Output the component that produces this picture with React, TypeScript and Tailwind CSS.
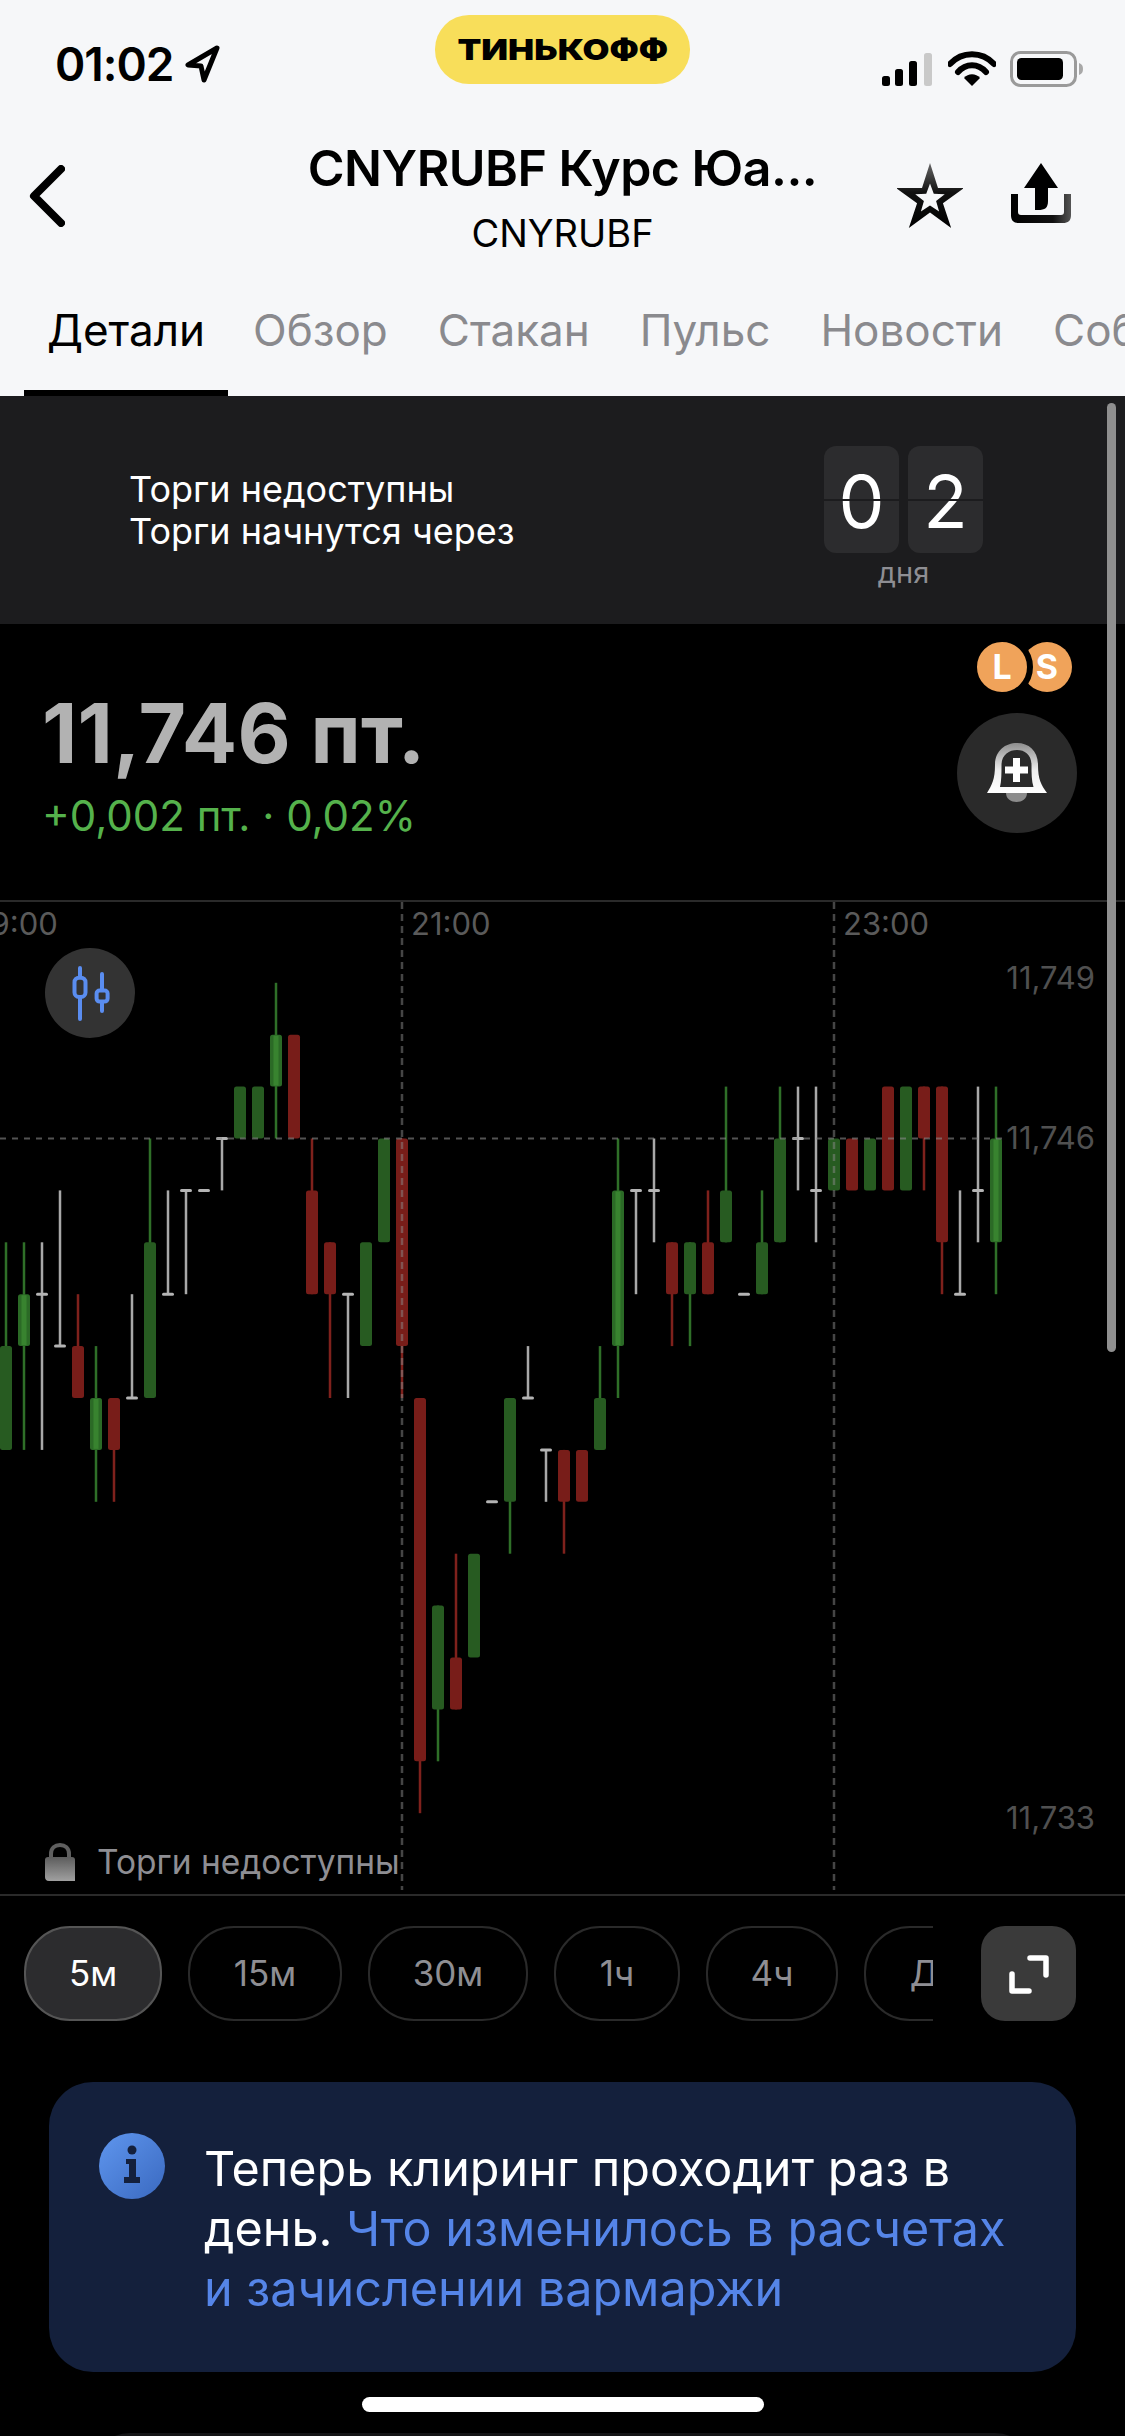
import React from "react";

// candle: [index, colour, bodyTop, bodyBottom, wickTop, wickBottom, bright]
// values are price levels below 11,746 (one level = 0.001)
type Candle = { i: number; c: "g" | "r" | "w"; t: number; b: number; wt?: number; wb?: number; hi?: boolean };

const CANDLES: Candle[] = [
  { i: 0, c: "g", t: 4, b: 6, wt: 2, wb: 6 },
  { i: 1, c: "g", t: 3, b: 4, wt: 2, wb: 6, hi: true },
  { i: 2, c: "w", t: 3, b: 3, wt: 2, wb: 6 },
  { i: 3, c: "w", t: 4, b: 4, wt: 1, wb: 4 },
  { i: 4, c: "r", t: 4, b: 5, wt: 3, wb: 5 },
  { i: 5, c: "g", t: 5, b: 6, wt: 4, wb: 7, hi: true },
  { i: 6, c: "r", t: 5, b: 6, wt: 5, wb: 7 },
  { i: 7, c: "w", t: 5, b: 5, wt: 3, wb: 5 },
  { i: 8, c: "g", t: 2, b: 5, wt: 0, wb: 5 },
  { i: 9, c: "w", t: 3, b: 3, wt: 1, wb: 3 },
  { i: 10, c: "w", t: 1, b: 1, wt: 1, wb: 3 },
  { i: 11, c: "w", t: 1, b: 1 },
  { i: 12, c: "w", t: 0, b: 0, wt: 0, wb: 1 },
  { i: 13, c: "g", t: -1, b: 0 },
  { i: 14, c: "g", t: -1, b: 0 },
  { i: 15, c: "g", t: -2, b: -1, wt: -3, wb: 0, hi: true },
  { i: 16, c: "r", t: -2, b: 0 },
  { i: 17, c: "r", t: 1, b: 3, wt: 0, wb: 3 },
  { i: 18, c: "r", t: 2, b: 3, wt: 2, wb: 5 },
  { i: 19, c: "w", t: 3, b: 3, wt: 3, wb: 5 },
  { i: 20, c: "g", t: 2, b: 4 },
  { i: 21, c: "g", t: 0, b: 2 },
  { i: 22, c: "r", t: 0, b: 4, wt: 0, wb: 5 },
  { i: 23, c: "r", t: 5, b: 12, wt: 5, wb: 13 },
  { i: 24, c: "g", t: 9, b: 11, wt: 9, wb: 12 },
  { i: 25, c: "r", t: 10, b: 11, wt: 8, wb: 11 },
  { i: 26, c: "g", t: 8, b: 10 },
  { i: 27, c: "w", t: 7, b: 7 },
  { i: 28, c: "g", t: 5, b: 7, wt: 5, wb: 8 },
  { i: 29, c: "w", t: 5, b: 5, wt: 4, wb: 5 },
  { i: 30, c: "w", t: 6, b: 6, wt: 6, wb: 7 },
  { i: 31, c: "r", t: 6, b: 7, wt: 6, wb: 8 },
  { i: 32, c: "r", t: 6, b: 7 },
  { i: 33, c: "g", t: 5, b: 6, wt: 4, wb: 6 },
  { i: 34, c: "g", t: 1, b: 4, wt: 0, wb: 5, hi: true },
  { i: 35, c: "w", t: 1, b: 1, wt: 1, wb: 3 },
  { i: 36, c: "w", t: 1, b: 1, wt: 0, wb: 2 },
  { i: 37, c: "r", t: 2, b: 3, wt: 2, wb: 4 },
  { i: 38, c: "g", t: 2, b: 3, wt: 2, wb: 4 },
  { i: 39, c: "r", t: 2, b: 3, wt: 1, wb: 3 },
  { i: 40, c: "g", t: 1, b: 2, wt: -1, wb: 2 },
  { i: 41, c: "w", t: 3, b: 3 },
  { i: 42, c: "g", t: 2, b: 3, wt: 1, wb: 3 },
  { i: 43, c: "g", t: 0, b: 2, wt: -1, wb: 2 },
  { i: 44, c: "w", t: 0, b: 0, wt: -1, wb: 1 },
  { i: 45, c: "w", t: 1, b: 1, wt: -1, wb: 2 },
  { i: 46, c: "g", t: 0, b: 1 },
  { i: 47, c: "r", t: 0, b: 1 },
  { i: 48, c: "g", t: 0, b: 1 },
  { i: 49, c: "r", t: -1, b: 1 },
  { i: 50, c: "g", t: -1, b: 1 },
  { i: 51, c: "r", t: -1, b: 0, wt: -1, wb: 1 },
  { i: 52, c: "r", t: -1, b: 2, wt: -1, wb: 3 },
  { i: 53, c: "w", t: 3, b: 3, wt: 1, wb: 3 },
  { i: 54, c: "w", t: 1, b: 1, wt: -1, wb: 2 },
  { i: 55, c: "g", t: 0, b: 2, wt: -1, wb: 3, hi: true },
];

const BODY = { g: "#275b21", r: "#781d19", w: "#b4b4b4" };
const WICK = { g: "#2f6f28", r: "#7f211c", w: "#a8a8a8" };

const yOf = (n: number) => 236.5 + 51.9 * n;
const xOf = (i: number) => 6 + 18 * i;

function CandleChart() {
  return (
    <svg width="1125" height="992" className="block">
      {CANDLES.map((d) => {
        const x = xOf(d.i);
        return (
          <g key={d.i}>
            {d.wt !== undefined && d.wb !== undefined && (
              <rect x={x - 1.25} y={yOf(d.wt)} width="2.5" height={yOf(d.wb) - yOf(d.wt)} fill={WICK[d.c]} />
            )}
            {d.c === "w" ? (
              <rect x={x - 6} y={yOf(d.t) - 1.5} width="12" height="3" rx="1.5" fill={BODY.w} />
            ) : (
              <rect x={x - 6} y={yOf(d.t)} width="12" height={yOf(d.b) - yOf(d.t)} rx="2.5" fill={d.hi ? "#2b6a26" : BODY[d.c]} />
            )}
            {d.hi && <rect x={x - 2.5} y={yOf(d.t) + 1} width="5" height={yOf(d.b) - yOf(d.t) - 2} fill="#38832f" />}
          </g>
        );
      })}
      <line x1="0" y1="236.5" x2="1002" y2="236.5" stroke="#8a8a8a" strokeOpacity="0.6" strokeWidth="2" strokeDasharray="6 6" />
      <line x1="402" y1="0" x2="402" y2="988" stroke="#8a8a8a" strokeOpacity="0.5" strokeWidth="2.5" strokeDasharray="7 5" />
      <line x1="834" y1="0" x2="834" y2="988" stroke="#8a8a8a" strokeOpacity="0.5" strokeWidth="2.5" strokeDasharray="7 5" />
    </svg>
  );
}

function StarIcon() {
  const pts = (R: number, r: number) =>
    Array.from({ length: 10 }, (_, k) => {
      const a = (-90 + 36 * k) * (Math.PI / 180);
      const q = k % 2 === 0 ? R : r;
      return `${33 + q * Math.cos(a)} ${36 + q * Math.sin(a)}`;
    }).join(" L");
  return (
    <svg width="66" height="66" viewBox="0 0 66 66">
      <defs>
        <linearGradient id="starFill" x1="0" y1="0" x2="0" y2="1">
          <stop offset="0" stopColor="#666" />
          <stop offset="0.45" stopColor="#111" />
          <stop offset="1" stopColor="#000" />
        </linearGradient>
      </defs>
      <path d={`M${pts(36, 13.6)}Z M${pts(15.5, 6.4)}Z`} fill="url(#starFill)" fillRule="evenodd" />
    </svg>
  );
}

function ShareIcon() {
  return (
    <svg width="60" height="62" viewBox="0 0 60 62">
      <defs>
        <linearGradient id="tray" x1="0" y1="0" x2="1" y2="0">
          <stop offset="0" stopColor="#000" />
          <stop offset="0.7" stopColor="#111" />
          <stop offset="1" stopColor="#555" />
        </linearGradient>
      </defs>
      <path d="M30 0 L47 25 L37 25 L37 38 C37 45 34 47 27 47 L24 47 L24 25 L13 25Z" fill="#000" />
      <path d="M0 31 L7 31 L7 49 C7 51 8 52 10 52 L50 52 C52 52 53 51 53 49 L53 31 L60 31 L60 52 C60 58 57 60 52 60 L8 60 C3 60 0 58 0 52Z" fill="url(#tray)" />
    </svg>
  );
}

function BellIcon() {
  return (
    <svg width="60" height="60" viewBox="0 0 60 60">
      <defs>
        <linearGradient id="bell" x1="0" y1="0" x2="0" y2="1">
          <stop offset="0" stopColor="#8d8d8d" />
          <stop offset="0.55" stopColor="#eeeeee" />
          <stop offset="1" stopColor="#ffffff" />
        </linearGradient>
      </defs>
      <path d="M19 50 H40 C40 62 19 62 19 50Z" fill="#8c8c8c" />
      <path
        d="M0 50 C5 42 8 36 8 22 C8 8 18 0 30 0 C42 0 51 8 51 22 C51 36 54 42 60 50Z M13 44 H46.5 C44.5 38 44.5 30 44.5 22 C44.5 12 38 7 30 7 C22 7 14.5 12 14.5 22 C14.5 30 14.5 38 13 44Z"
        fill="url(#bell)"
        fillRule="evenodd"
      />
      <path d="M26 15 H33 V23.5 H41 V30.5 H33 V39 H26 V30.5 H18 V23.5 H26Z" fill="#fff" />
    </svg>
  );
}

function StatusIcons() {
  return (
    <div className="flex items-center">
      {/* signal */}
      <svg width="51" height="34" viewBox="0 0 51 34" className="mr-[15px]">
        <rect x="0" y="24" width="8" height="10" rx="2.5" fill="#000" />
        <rect x="13" y="17" width="8" height="17" rx="2.5" fill="#000" />
        <rect x="27" y="9" width="8" height="25" rx="2.5" fill="#000" />
        <rect x="42" y="1" width="8" height="33" rx="2.5" fill="#c9c9c9" />
      </svg>
      {/* wifi */}
      <svg width="48" height="36" viewBox="0 0 48 36" className="mr-[14px]">
        <path d="M2 13 C14 0 34 0 46 13" fill="none" stroke="#000" strokeWidth="6" strokeLinecap="round" />
        <path d="M10 21 C18 12 30 12 38 21" fill="none" stroke="#000" strokeWidth="6" strokeLinecap="round" />
        <path d="M24 35 L16 27 C20 22 28 22 32 27Z" fill="#000" />
      </svg>
      {/* battery */}
      <svg width="74" height="36" viewBox="0 0 74 36">
        <rect x="1.5" y="1.5" width="64" height="33" rx="9" fill="none" stroke="#9a9a9a" strokeWidth="3" />
        <rect x="7" y="7" width="46" height="22" rx="4.5" fill="#000" />
        <path d="M69 12 C72 13 73 15 73 18 C73 21 72 23 69 24Z" fill="#a8a8a8" />
      </svg>
    </div>
  );
}

const TABS = ["Обзор", "Стакан", "Пульс", "Новости", "События"];

const RANGES = [
  { label: "15м", cls: "w-[154px]" },
  { label: "30м", cls: "w-[160px]" },
  { label: "1ч", cls: "w-[126px]" },
  { label: "4ч", cls: "w-[132px]" },
];

export default function App() {
  return (
    <div className="relative w-[1125px] h-[2436px] overflow-hidden bg-black font-['Inter','Noto_Sans',sans-serif]">
      {/* Light header */}
      <header className="relative h-[396px] bg-[#f6f7f9] text-black">
        <div className="absolute left-[435px] top-[15px] flex h-[69px] w-[255px] items-center justify-center rounded-[34px] bg-[#f8de5a]">
          <span className="scale-x-[1.2] text-[29px] font-black leading-none">ТИНЬКОФФ</span>
        </div>

        {/* Status bar */}
        <div className="flex h-[93px] items-end justify-between pb-[6px] pl-[55px] pr-[41px]">
          <div className="flex items-center gap-[11px]">
            <span className="text-[46px] font-semibold leading-none tracking-[-1px]">01:02</span>
            <svg width="36" height="38" viewBox="0 0 36 38">
              <path d="M33 3 L4 20 L17 21 L20 35Z" fill="none" stroke="#000" strokeWidth="5" strokeLinejoin="round" />
            </svg>
          </div>
          <StatusIcons />
        </div>

        {/* Title row */}
        <div className="grid h-[170px] grid-cols-[1fr_auto_1fr] items-start px-[54px] pt-[46px]">
          <svg width="36" height="62" viewBox="0 0 36 62" className="ml-[-25px] mt-[26px]">
            <path d="M32 4 L5 31 L32 58" fill="none" stroke="#000" strokeWidth="8" strokeLinecap="round" strokeLinejoin="round" />
          </svg>
          <div className="flex flex-col items-center">
            <span className="text-[50px] font-semibold leading-[58px] tracking-[-0.5px]">CNYRUBF Курс Юа...</span>
            <span className="mt-[14px] text-[38px] leading-[44px]">CNYRUBF</span>
          </div>
          <div className="mt-[24px] flex items-start justify-end gap-[48px]">
            <StarIcon />
            <ShareIcon />
          </div>
        </div>

        {/* Tabs */}
        <nav className="absolute inset-x-0 bottom-0 flex h-[96px] overflow-hidden pl-[24px]">
          <div className="flex h-full w-[204px] shrink-0 items-start justify-center border-b-[6px] border-black pt-[4px] text-[44px] leading-[52px]">
            Детали
          </div>
          {TABS.map((t) => (
            <div key={t} className="shrink-0 px-[25px] pt-[4px] text-[44px] leading-[52px] text-[#8a8a8e]">
              {t}
            </div>
          ))}
        </nav>
      </header>

      {/* Trading unavailable banner */}
      <section className="flex h-[228px] items-start bg-[#1c1c1e] pl-[129px] pr-[142px] pt-[50px] text-white">
        <div className="flex-1 pt-[22px] text-[36px] leading-[42px]">
          <p>Торги недоступны</p>
          <p>Торги начнутся через</p>
        </div>
        <div className="flex flex-col items-center">
          <div className="flex gap-[9px]">
            {["0", "2"].map((n) => (
              <div key={n} className="relative flex h-[107px] w-[75px] items-center justify-center rounded-[12px] bg-[#2c2c2e] pt-[4px] text-[73px] leading-none">
                {n}
                <div className="absolute inset-x-0 top-[53px] h-[2px] bg-[#1c1c1e]" />
              </div>
            ))}
          </div>
          <span className="mt-[3px] text-[29px] leading-[34px] text-[#8e8e93]">дня</span>
        </div>
      </section>

      {/* Price */}
      <section className="relative flex h-[276px] flex-col pl-[42px] pt-[65px]">
        <div className="text-[82px] font-bold leading-[90px] tracking-[0.2px] text-[#b2b2b2]">11,746 пт.</div>
        <div className="mt-[13px] text-[42px] leading-[48px] text-[#55b24c]">+0,002 пт. · 0,02%</div>
        <div className="absolute left-[971px] top-[12px] h-[62px] w-[106px]">
          <div className="absolute left-[51px] top-[6px] flex h-[50px] w-[50px] items-center justify-center rounded-full bg-[#f0a35a] text-[34px] font-bold leading-none text-white">
            S
          </div>
          <div className="absolute left-0 top-0 flex h-[62px] w-[62px] items-center justify-center rounded-full border-[6px] border-black bg-[#f0a35a] text-[34px] font-bold leading-none text-white">
            L
          </div>
        </div>
        <div className="absolute left-[957px] top-[89px] flex h-[120px] w-[120px] items-center justify-center rounded-full bg-[#2a2a2a]">
          <BellIcon />
        </div>
      </section>

      {/* Chart */}
      <section className="relative h-[996px] border-y-2 border-[#2a2a2a]">
        <CandleChart />
        <span className="absolute left-[-22px] top-[4px] text-[31px] leading-[36px] text-[#5a5a5a]">19:00</span>
        <span className="absolute left-[411px] top-[4px] text-[31px] leading-[36px] text-[#5a5a5a]">21:00</span>
        <span className="absolute left-[843px] top-[4px] text-[31px] leading-[36px] text-[#5a5a5a]">23:00</span>
        <span className="absolute right-[30px] top-[58px] text-[31px] leading-[36px] text-[#505050]">11,749</span>
        <span className="absolute right-[30px] top-[218px] text-[31px] leading-[36px] text-[#505050]">11,746</span>
        <span className="absolute right-[30px] top-[898px] text-[31px] leading-[36px] text-[#505050]">11,733</span>
        <div className="absolute left-[45px] top-[46px] flex h-[90px] w-[90px] items-center justify-center rounded-full bg-[#333333]">
          <svg width="44" height="56" viewBox="0 0 44 56">
            <path d="M12 3 V54 M34 9 V46" stroke="#5a8df0" strokeWidth="4" strokeLinecap="round" />
            <rect x="6.5" y="12.7" width="11" height="19.3" rx="4.5" fill="#333333" stroke="#5a8df0" strokeWidth="4" />
            <rect x="28.6" y="25.6" width="11" height="11" rx="3" fill="#333333" stroke="#5a8df0" strokeWidth="4" />
          </svg>
        </div>
        <div className="absolute left-[45px] top-[940px] flex items-center gap-[22px]">
          <svg width="30" height="38" viewBox="0 0 30 38">
            <defs>
              <linearGradient id="lock" x1="0" y1="0" x2="0" y2="1">
                <stop offset="0" stopColor="#5c5c5c" />
                <stop offset="1" stopColor="#a0a0a0" />
              </linearGradient>
            </defs>
            <path d="M6 18 V11 C6 5 10 2 15 2 C20 2 24 5 24 11 V18" fill="none" stroke="#5f5f5f" strokeWidth="4" />
            <path d="M3 14 H27 C29 14 30 15 30 17 V38 H4 C1 38 0 36 0 34 V17 C0 15 1 14 3 14Z" fill="url(#lock)" />
          </svg>
          <span className="text-[33.5px] leading-[40px] text-[#8e8e93]">Торги недоступны</span>
        </div>
      </section>

      {/* Timeframes */}
      <div className="flex h-[95px] mt-[30px] justify-between pl-[24px] pr-[49px]">
        <div className="flex w-[909px] gap-[26px] overflow-hidden">
          <div className="flex w-[138px] shrink-0 items-center justify-center rounded-[46px] border-2 border-[#555555] bg-[#2c2c2e] text-[35px] text-white">
            5м
          </div>
          {RANGES.map((r) => (
            <div key={r.label} className={`flex ${r.cls} shrink-0 items-center justify-center rounded-[46px] border-2 border-[#2a2a2a] text-[35px] text-[#8e8e93]`}>
              {r.label}
            </div>
          ))}
          <div className="flex w-[120px] shrink-0 items-center justify-center rounded-[46px] border-2 border-[#2a2a2a] text-[35px] text-[#8e8e93]">
            Д
          </div>
        </div>
        <div className="flex w-[95px] items-center justify-center rounded-[24px] bg-[#3a3a3a]">
          <svg width="48" height="48" viewBox="0 0 48 48">
            <path d="M25 8 H41 V25 M7 24 V41 H24" fill="none" stroke="#fff" strokeWidth="5.5" strokeLinecap="round" strokeLinejoin="round" />
          </svg>
        </div>
      </div>

      {/* Info card */}
      <div className="ml-[49px] mt-[61px] flex h-[290px] w-[1027px] rounded-[44px] bg-[#14203c] pl-[50px] pt-[50px]">
        <svg width="66" height="66" viewBox="0 0 66 66" className="mt-[1px] shrink-0">
          <defs>
            <linearGradient id="info" x1="0" y1="0" x2="1" y2="1">
              <stop offset="0" stopColor="#5f96ee" />
              <stop offset="1" stopColor="#3a69c0" />
            </linearGradient>
          </defs>
          <circle cx="33" cy="33" r="33" fill="url(#info)" />
          <circle cx="33" cy="17" r="4.5" fill="#14203c" />
          <path d="M27 26 H37 V44 H41 V50 H25 V44 H30 V31 H27Z" fill="#14203c" />
        </svg>
        <p className="ml-[39px] w-[830px] pt-[7px] text-[48.5px] leading-[60px] text-white">
          Теперь клиринг проходит раз в день. <span className="text-[#5585e8]">Что изменилось в расчетах и зачислении вармаржи</span>
        </p>
      </div>

      {/* Next card peeking out */}
      <div className="mx-[90px] mt-[61px] h-[40px] rounded-t-[40px] bg-[#141416]" />

      {/* Scrollbar and home indicator sit over the page */}
      <div className="absolute left-[1107px] top-[403px] h-[949px] w-[9px] rounded-full bg-[#8f8f8f]" />
      <div className="absolute left-[362px] top-[2397px] h-[15px] w-[402px] rounded-full bg-white" />
    </div>
  );
}
